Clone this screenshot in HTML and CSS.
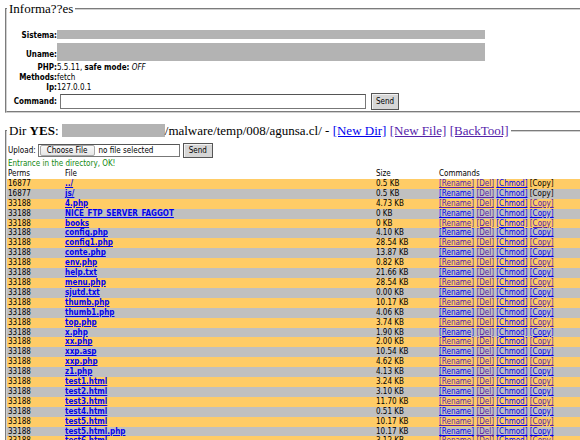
FILE: index.html
```html
<!DOCTYPE html>
<html lang="pt">
<head>
  <meta charset="UTF-8">
  <title>Informa??es</title>
  <link rel="stylesheet" href="styles.css">
</head>
<body>
  <fieldset class="box info">
    <legend>Informa??es</legend>
    <table class="info-table">
      <tr class="row-sys"><th>Sistema:</th><td><span class="redact redact-sm"></span></td></tr>
      <tr class="row-uname"><th>Uname:</th><td><span class="redact redact-lg"></span></td></tr>
      <tr class="row-line"><th>PHP:</th><td>5.5.11, <b>safe mode:</b> <i>OFF</i></td></tr>
      <tr class="row-line"><th>Methods:</th><td>fetch</td></tr>
      <tr class="row-line"><th>Ip:</th><td>127.0.0.1</td></tr>
      <tr class="row-cmd">
        <th>Command:</th>
        <td>
          <div class="cmd-line">
            <input type="text" class="cmd-input">
            <button class="btn">Send</button>
          </div>
        </td>
      </tr>
    </table>
  </fieldset>

  <fieldset class="box dir">
    <legend>Dir <b>YES</b>: <span class="redact redact-path"></span>/malware/temp/008/agunsa.cl/ - <a href="#" class="lnk">[New Dir]</a> <a href="#" class="lnk visited">[New File]</a> <a href="#" class="lnk visited">[BackTool]</a></legend>

    <div class="upload">
      <span>Upload:</span>
      <span class="file-box"><span class="file-btn">Choose File</span><span class="file-name">no file selected</span></span>
      <button class="btn">Send</button>
    </div>
    <div class="status">Entrance in the directory, OK!</div>

    <table class="files">
      <colgroup>
        <col class="c-perm"><col class="c-file"><col class="c-size"><col>
      </colgroup>
      <thead>
        <tr><td>Perms</td><td>File</td><td>Size</td><td>Commands</td></tr>
      </thead>
      <tbody>
        <tr><td>16877</td><td><a href="#" class="fname">../</a></td><td>0.5 KB</td><td><a href="#" class="visited">[Rename]</a> <a href="#" class="visited">[Del]</a> <a href="#">[Chmod]</a> [Copy]</td></tr>
        <tr><td>16877</td><td><a href="#" class="fname">js/</a></td><td>0.5 KB</td><td><a href="#">[Rename]</a> <a href="#" class="visited">[Del]</a> <a href="#">[Chmod]</a> [Copy]</td></tr>
        <tr><td>33188</td><td><a href="#" class="fname">4.php</a></td><td>4.73 KB</td><td><a href="#" class="visited">[Rename]</a> <a href="#" class="visited">[Del]</a> <a href="#">[Chmod]</a> <a href="#" class="visited">[Copy]</a></td></tr>
        <tr><td>33188</td><td><a href="#" class="fname">NICE_FTP_SERVER_FAGGOT</a></td><td>0 KB</td><td><a href="#">[Rename]</a> <a href="#" class="visited">[Del]</a> <a href="#">[Chmod]</a> <a href="#">[Copy]</a></td></tr>
        <tr><td>33188</td><td><a href="#" class="fname">books</a></td><td>0 KB</td><td><a href="#" class="visited">[Rename]</a> <a href="#" class="visited">[Del]</a> <a href="#">[Chmod]</a> <a href="#" class="visited">[Copy]</a></td></tr>
        <tr><td>33188</td><td><a href="#" class="fname">config.php</a></td><td>4.10 KB</td><td><a href="#">[Rename]</a> <a href="#" class="visited">[Del]</a> <a href="#">[Chmod]</a> <a href="#">[Copy]</a></td></tr>
        <tr><td>33188</td><td><a href="#" class="fname">config1.php</a></td><td>28.54 KB</td><td><a href="#" class="visited">[Rename]</a> <a href="#" class="visited">[Del]</a> <a href="#">[Chmod]</a> <a href="#" class="visited">[Copy]</a></td></tr>
        <tr><td>33188</td><td><a href="#" class="fname">conte.php</a></td><td>13.87 KB</td><td><a href="#">[Rename]</a> <a href="#" class="visited">[Del]</a> <a href="#">[Chmod]</a> <a href="#">[Copy]</a></td></tr>
        <tr><td>33188</td><td><a href="#" class="fname">env.php</a></td><td>0.82 KB</td><td><a href="#" class="visited">[Rename]</a> <a href="#" class="visited">[Del]</a> <a href="#">[Chmod]</a> <a href="#" class="visited">[Copy]</a></td></tr>
        <tr><td>33188</td><td><a href="#" class="fname">help.txt</a></td><td>21.66 KB</td><td><a href="#">[Rename]</a> <a href="#" class="visited">[Del]</a> <a href="#">[Chmod]</a> <a href="#">[Copy]</a></td></tr>
        <tr><td>33188</td><td><a href="#" class="fname">menu.php</a></td><td>28.54 KB</td><td><a href="#" class="visited">[Rename]</a> <a href="#" class="visited">[Del]</a> <a href="#">[Chmod]</a> <a href="#" class="visited">[Copy]</a></td></tr>
        <tr><td>33188</td><td><a href="#" class="fname">sjutd.txt</a></td><td>0.00 KB</td><td><a href="#">[Rename]</a> <a href="#" class="visited">[Del]</a> <a href="#">[Chmod]</a> <a href="#">[Copy]</a></td></tr>
        <tr><td>33188</td><td><a href="#" class="fname">thumb.php</a></td><td>10.17 KB</td><td><a href="#" class="visited">[Rename]</a> <a href="#" class="visited">[Del]</a> <a href="#">[Chmod]</a> <a href="#" class="visited">[Copy]</a></td></tr>
        <tr><td>33188</td><td><a href="#" class="fname">thumb1.php</a></td><td>4.06 KB</td><td><a href="#">[Rename]</a> <a href="#" class="visited">[Del]</a> <a href="#">[Chmod]</a> <a href="#">[Copy]</a></td></tr>
        <tr><td>33188</td><td><a href="#" class="fname">top.php</a></td><td>3.74 KB</td><td><a href="#" class="visited">[Rename]</a> <a href="#" class="visited">[Del]</a> <a href="#">[Chmod]</a> <a href="#" class="visited">[Copy]</a></td></tr>
        <tr><td>33188</td><td><a href="#" class="fname">x.php</a></td><td>1.90 KB</td><td><a href="#">[Rename]</a> <a href="#" class="visited">[Del]</a> <a href="#">[Chmod]</a> <a href="#">[Copy]</a></td></tr>
        <tr><td>33188</td><td><a href="#" class="fname">xx.php</a></td><td>2.00 KB</td><td><a href="#" class="visited">[Rename]</a> <a href="#" class="visited">[Del]</a> <a href="#">[Chmod]</a> <a href="#" class="visited">[Copy]</a></td></tr>
        <tr><td>33188</td><td><a href="#" class="fname">xxp.asp</a></td><td>10.54 KB</td><td><a href="#">[Rename]</a> <a href="#" class="visited">[Del]</a> <a href="#">[Chmod]</a> <a href="#">[Copy]</a></td></tr>
        <tr><td>33188</td><td><a href="#" class="fname">xxp.php</a></td><td>4.62 KB</td><td><a href="#" class="visited">[Rename]</a> <a href="#" class="visited">[Del]</a> <a href="#">[Chmod]</a> <a href="#" class="visited">[Copy]</a></td></tr>
        <tr><td>33188</td><td><a href="#" class="fname">z1.php</a></td><td>4.13 KB</td><td><a href="#">[Rename]</a> <a href="#" class="visited">[Del]</a> <a href="#">[Chmod]</a> <a href="#">[Copy]</a></td></tr>
        <tr><td>33188</td><td><a href="#" class="fname">test1.html</a></td><td>3.24 KB</td><td><a href="#" class="visited">[Rename]</a> <a href="#" class="visited">[Del]</a> <a href="#">[Chmod]</a> <a href="#" class="visited">[Copy]</a></td></tr>
        <tr><td>33188</td><td><a href="#" class="fname">test2.html</a></td><td>3.10 KB</td><td><a href="#">[Rename]</a> <a href="#" class="visited">[Del]</a> <a href="#">[Chmod]</a> <a href="#">[Copy]</a></td></tr>
        <tr><td>33188</td><td><a href="#" class="fname">test3.html</a></td><td>11.70 KB</td><td><a href="#" class="visited">[Rename]</a> <a href="#" class="visited">[Del]</a> <a href="#">[Chmod]</a> <a href="#" class="visited">[Copy]</a></td></tr>
        <tr><td>33188</td><td><a href="#" class="fname">test4.html</a></td><td>0.51 KB</td><td><a href="#">[Rename]</a> <a href="#" class="visited">[Del]</a> <a href="#">[Chmod]</a> <a href="#">[Copy]</a></td></tr>
        <tr><td>33188</td><td><a href="#" class="fname">test5.html</a></td><td>10.17 KB</td><td><a href="#" class="visited">[Rename]</a> <a href="#" class="visited">[Del]</a> <a href="#">[Chmod]</a> <a href="#" class="visited">[Copy]</a></td></tr>
        <tr><td>33188</td><td><a href="#" class="fname">test5.html.php</a></td><td>10.17 KB</td><td><a href="#">[Rename]</a> <a href="#" class="visited">[Del]</a> <a href="#">[Chmod]</a> <a href="#">[Copy]</a></td></tr>
        <tr><td>33188</td><td><a href="#" class="fname">test6.html</a></td><td>3.12 KB</td><td><a href="#" class="visited">[Rename]</a> <a href="#" class="visited">[Del]</a> <a href="#">[Chmod]</a> <a href="#" class="visited">[Copy]</a></td></tr>
      </tbody>
    </table>
  </fieldset>
</body>
</html>
```

FILE: styles.css
```css
html, body {
  overflow: hidden;
}

body {
  margin: 0;
  padding: 1px 0 0 5px;
  width: 720px;
  background: #fff;
  color: #000;
  font-family: "DejaVu Sans Condensed", "DejaVu Sans", sans-serif;
  font-stretch: condensed;
  font-size: 8px;
}

a {
  color: #0000ee;
  text-decoration: underline;
}

a.visited {
  color: #5522aa;
}

fieldset.box {
  margin: 0;
  padding: 0;
  border: 2px groove #d0d0d0;
  min-width: 0;
}

fieldset.dir {
  margin-top: 10px;
}

legend {
  padding: 0 2px;
  font-family: "Liberation Serif", serif;
  font-size: 13px;
  line-height: 15px;
}

.redact {
  display: inline-block;
  background: #b3b3b3;
  vertical-align: middle;
}

.redact-sm {
  width: 428px;
  height: 9px;
}

.redact-lg {
  width: 428px;
  height: 18px;
}

.redact-path {
  width: 103px;
  height: 13px;
  vertical-align: -2px;
}

/* info box */
.info-table {
  border-collapse: collapse;
  margin: 13px 0 1px;
}

.info-table th {
  width: 50px;
  padding: 0;
  text-align: right;
  font-weight: bold;
  white-space: nowrap;
}

.info-table td {
  padding: 0;
  white-space: nowrap;
}

.row-sys th, .row-sys td {
  height: 11px;
}

.row-sys th {
  padding-top: 2px;
  height: 9px;
}

.row-uname td {
  height: 23px;
}

.row-uname th {
  padding-top: 6px;
  height: 17px;
}

.row-line th, .row-line td {
  height: 10px;
  line-height: 10px;
}

.row-cmd th, .row-cmd td {
  height: 16px;
}

.cmd-line {
  display: flex;
  align-items: center;
  gap: 5px;
  padding-left: 3px;
}

.cmd-input {
  box-sizing: border-box;
  width: 306px;
  height: 15px;
  margin: 0;
  padding: 0 2px;
  border: 1px solid #777;
  border-top-color: #555;
  font-size: 8px;
}

.btn {
  box-sizing: border-box;
  height: 17px;
  margin: 0;
  padding: 0 4px;
  border: 1px solid #555;
  background: #d6d6d6;
  box-shadow: inset 1px 1px 0 #f2f2f2;
  font-family: inherit;
  font-size: 8px;
  color: #000;
}

/* dir box */
.upload {
  display: flex;
  align-items: center;
  gap: 2px;
  height: 16px;
  margin-top: 4px;
  padding-left: 1px;
}

.file-box {
  box-sizing: border-box;
  display: flex;
  align-items: center;
  width: 142px;
  height: 13px;
  border: 1px solid #777;
  border-top-color: #555;
  background: #fff;
}

.file-btn {
  box-sizing: border-box;
  margin-left: 1px;
  height: 11px;
  line-height: 9px;
  padding: 0 6px;
  border: 1px solid #aaa;
  border-radius: 2px;
  background: linear-gradient(#fafafa, #e6e6e6);
}

.file-name {
  margin-left: 4px;
}

.upload .btn {
  height: 15px;
  margin-left: 1px;
  padding: 0 5px;
}

.status {
  height: 10px;
  line-height: 10px;
  margin-top: 1px;
  padding-left: 1px;
  color: #118811;
}

.files {
  width: 100%;
  border-collapse: collapse;
  table-layout: fixed;
  margin-top: 0;
}

.c-perm {
  width: 57px;
}

.c-file {
  width: 311px;
}

.c-size {
  width: 63px;
}

.files td {
  height: 9.9px;
  line-height: 9.9px;
  padding: 0 0 0 1px;
  white-space: nowrap;
  overflow: hidden;
}

.files tbody tr:nth-child(odd) {
  background: #ffcc66;
}

.files tbody tr:nth-child(even) {
  background: #c0c0c0;
}

.fname {
  font-weight: bold;
}
```
